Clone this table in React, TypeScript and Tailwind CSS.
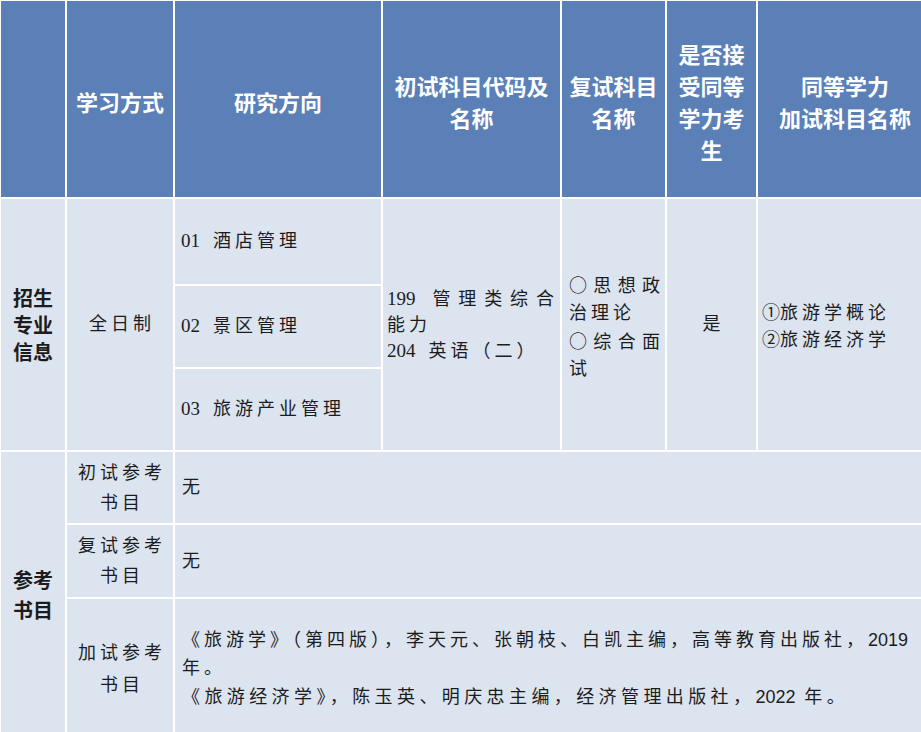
const head =
  "flex items-center justify-center bg-[#5b7fb7] pt-1 text-center font-['Noto_Sans_CJK_SC',sans-serif] text-[22px] font-bold leading-[32px] text-white";
const body =
  "bg-[#dce4f0] font-['Liberation_Serif','Noto_Sans_CJK_SC',serif] text-[18px] tracking-[4px] text-[#1c1c1c]";
const side =
  "flex items-center justify-center bg-[#dce4f0] text-center font-['Noto_Sans_CJK_SC',sans-serif] text-[20px] font-bold text-[#1c1c1c]";
const justify = "block [text-align-last:justify] [text-align:justify]";
const num = "mr-[13px] text-[19px] tracking-normal";
const circle = "font-['Noto_Sans_CJK_SC',sans-serif]";
const year = "font-['Liberation_Sans',sans-serif] tracking-normal";

export default function App() {
  return (
    <div className="h-[732px] w-[921px] overflow-hidden bg-white">
      <div className="grid w-max grid-cols-[64px_106px_206px_177px_103px_89px_182px] grid-rows-[196px_85px_81px_81px_71px_72px_139px] gap-[2px] bg-white p-px">
        {/* header */}
        <div className={`${head} col-start-1 row-start-1`} />
        <div className={`${head} col-start-2 row-start-1`}>学习方式</div>
        <div className={`${head} col-start-3 row-start-1`}>研究方向</div>
        <div className={`${head} col-start-4 row-start-1`}>
          初试科目代码及
          <br />
          名称
        </div>
        <div className={`${head} col-start-5 row-start-1`}>
          复试科目
          <br />
          名称
        </div>
        <div className={`${head} col-start-6 row-start-1`}>
          是否接
          <br />
          受同等
          <br />
          学力考
          <br />生
        </div>
        <div className={`${head} col-start-7 row-start-1 pr-2`}>
          同等学力
          <br />
          加试科目名称
        </div>

        {/* 招生专业信息 */}
        <div className={`${side} col-start-1 row-span-3 row-start-2 leading-[27px]`}>
          招生
          <br />
          专业
          <br />
          信息
        </div>
        <div className={`${body} col-start-2 row-span-3 row-start-2 flex items-center justify-center pl-1`}>
          全日制
        </div>
        <div className={`${body} col-start-3 row-start-2 flex items-center pl-[6px]`}>
          <span className={num}>01</span>酒店管理
        </div>
        <div className={`${body} col-start-3 row-start-3 flex items-center pl-[6px]`}>
          <span className={num}>02</span>景区管理
        </div>
        <div className={`${body} col-start-3 row-start-4 flex items-center pl-[6px]`}>
          <span className={num}>03</span>旅游产业管理
        </div>
        <div className={`${body} col-start-4 row-span-3 row-start-2 flex flex-col justify-center pl-1 pr-[2px] leading-[26px]`}>
          <span className={justify}>
            <span className={num}>199</span>管理类综合
          </span>
          <span>能力</span>
          <span>
            <span className={num}>204</span>英语（二）
          </span>
        </div>
        <div className={`${body} col-start-5 row-span-3 row-start-2 flex flex-col justify-center pl-[7px] pr-px pt-1 leading-[27px]`}>
          <span className={justify}>
            <span className={circle}>○</span>思想政
          </span>
          <span>治理论</span>
          <span className={justify}>
            <span className={circle}>○</span>综合面
          </span>
          <span>试</span>
        </div>
        <div className={`${body} col-start-6 row-span-3 row-start-2 flex items-center justify-center pl-1`}>是</div>
        <div className={`${body} col-start-7 row-span-3 row-start-2 flex flex-col justify-center pl-1 pt-1 leading-[27px] tracking-[3.5px]`}>
          <span>
            <span className="tracking-normal">①</span>旅游学概论
          </span>
          <span>
            <span className="tracking-normal">②</span>旅游经济学
          </span>
        </div>

        {/* 参考书目 */}
        <div className={`${side} col-start-1 row-span-3 row-start-5 leading-[30px]`}>
          参考
          <br />
          书目
        </div>
        <div className={`${body} col-start-2 row-start-5 flex items-center justify-center pl-1 text-center leading-[30px]`}>
          初试参考
          <br />
          书目
        </div>
        <div className={`${body} col-span-5 col-start-3 row-start-5 flex items-center pl-[7px]`}>无</div>
        <div className={`${body} col-start-2 row-start-6 flex items-center justify-center pl-1 text-center leading-[30px]`}>
          复试参考
          <br />
          书目
        </div>
        <div className={`${body} col-span-5 col-start-3 row-start-6 flex items-center pl-[7px]`}>无</div>
        <div className={`${body} col-start-2 row-start-7 flex items-center justify-center pl-1 text-center leading-[32px]`}>
          加试参考
          <br />
          书目
        </div>
        <div className={`${body} col-span-5 col-start-3 row-start-7 flex flex-col justify-center whitespace-nowrap pl-[7px] leading-[28.5px]`}>
          <span className="tracking-[4px]">
            《旅游学》（第四版），李天元、张朝枝、白凯主编，高等教育出版社，
            <span className={year}>2019</span>
          </span>
          <span>年。</span>
          <span className="tracking-[4.4px]">
            《旅游经济学》，陈玉英、明庆忠主编，经济管理出版社，
            <span className={year}>2022</span> 年。
          </span>
        </div>
      </div>
    </div>
  );
}
